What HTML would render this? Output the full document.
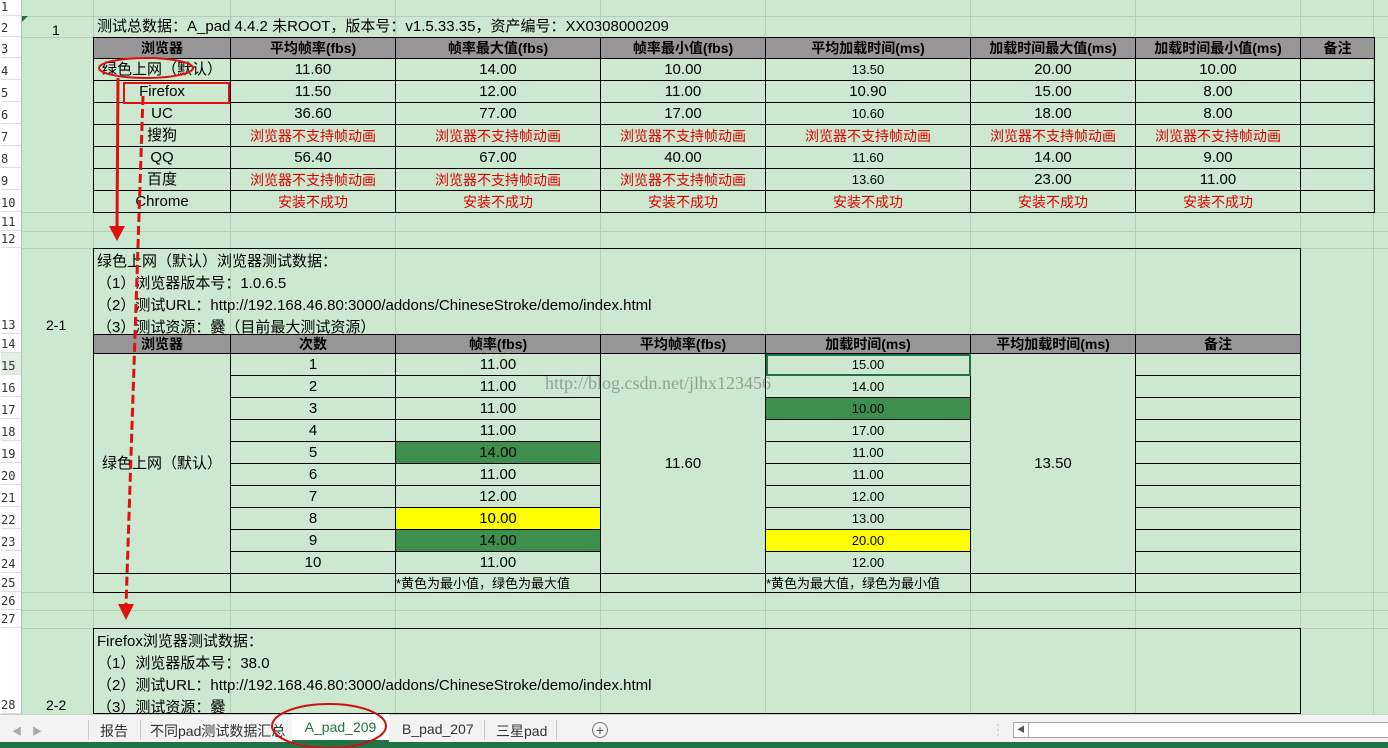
<!DOCTYPE html>
<html><head><meta charset="utf-8"><style>
*{margin:0;padding:0}
body{width:1388px;height:748px;overflow:hidden;background:#cce8cf;position:relative;font-family:"Liberation Sans","Noto Sans CJK SC",sans-serif;font-size:15px;color:#000}
.abs{position:absolute}
.hl{position:absolute;left:22px;right:0;height:1px;background:#b3cdb6}
.vl{position:absolute;top:0;height:714px;width:1px;background:#b3cdb6}
.rn{position:absolute;left:0;width:21px;background:#fff;border-right:1px solid #bbb;font-family:"DejaVu Sans Mono","Liberation Mono",monospace;font-size:12px;color:#333}
.rn div{position:absolute;left:1px;border-bottom:1px solid #ddd;width:20px;box-sizing:border-box;display:flex;align-items:flex-end;padding-bottom:1px}
table{position:absolute;border-collapse:collapse;table-layout:fixed}
td{border:1px solid #000;text-align:center;padding:0;white-space:nowrap;overflow:hidden;line-height:1}
.h td{background:#969696;font-weight:bold;font-size:14px}
.r{color:#e00000;font-size:14px}
.g{background:#3e8e4e}
.y{background:#ffff00}
.sm{font-size:13px}
.box{position:absolute;border:1px solid #000;box-sizing:border-box;padding:2px 0 0 3px;line-height:22px;font-size:15px}
</style></head><body>
<div class="hl" style="top:16px"></div><div class="hl" style="top:37px"></div><div class="hl" style="top:212px"></div><div class="hl" style="top:231px"></div><div class="hl" style="top:248px"></div><div class="hl" style="top:592px"></div><div class="hl" style="top:610px"></div><div class="hl" style="top:628px"></div>
<div class="vl" style="left:93px"></div><div class="vl" style="left:230px"></div><div class="vl" style="left:395px"></div><div class="vl" style="left:600px"></div><div class="vl" style="left:765px"></div><div class="vl" style="left:970px"></div><div class="vl" style="left:1135px"></div><div class="vl" style="left:1300px"></div><div class="vl" style="left:1373px"></div>
<div class="rn" style="top:0;height:714px">
<div style="top:0;height:16px">1</div><div style="top:16px;height:21px">2</div><div style="top:37px;height:21px">3</div><div style="top:58px;height:22px">4</div><div style="top:80px;height:22px">5</div><div style="top:102px;height:22px">6</div><div style="top:124px;height:22px">7</div><div style="top:146px;height:22px">8</div><div style="top:168px;height:22px">9</div><div style="top:190px;height:22px">10</div><div style="top:212px;height:19px">11</div><div style="top:231px;height:17px">12</div><div style="top:248px;height:86px">13</div><div style="top:334px;height:19px">14</div><div style="top:353px;height:22px;background:#e2efe4">15</div><div style="top:375px;height:22px">16</div><div style="top:397px;height:22px">17</div><div style="top:419px;height:22px">18</div><div style="top:441px;height:22px">19</div><div style="top:463px;height:22px">20</div><div style="top:485px;height:22px">21</div><div style="top:507px;height:22px">22</div><div style="top:529px;height:22px">23</div><div style="top:551px;height:22px">24</div><div style="top:573px;height:19px">25</div><div style="top:592px;height:18px">26</div><div style="top:610px;height:18px">27</div><div style="top:628px;height:86px">28</div>
</div>
<div class="abs" style="left:22px;top:16px;width:0;height:0;border-top:6px solid #217346;border-right:6px solid transparent"></div>
<div class="abs" style="left:52px;top:22px;font-size:14px">1</div>
<div class="abs" style="left:46px;top:317px;font-size:14px">2-1</div>
<div class="abs" style="left:46px;top:697px;font-size:14px">2-2</div>
<div class="abs" style="left:97px;top:17px;line-height:20px">测试总数据：A_pad 4.4.2 未ROOT，版本号：v1.5.33.35，资产编号：XX0308000209</div>

<table style="left:93px;top:37px;width:1281px">
<colgroup><col style="width:137px"><col style="width:165px"><col style="width:205px"><col style="width:165px"><col style="width:205px"><col style="width:165px"><col style="width:165px"><col style="width:74px"></colgroup>
<tr class="h" style="height:21px"><td>浏览器</td><td>平均帧率(fbs)</td><td>帧率最大值(fbs)</td><td>帧率最小值(fbs)</td><td>平均加载时间(ms)</td><td>加载时间最大值(ms)</td><td>加载时间最小值(ms)</td><td>备注</td></tr>
<tr style="height:22px"><td>绿色上网（默认）</td><td>11.60</td><td>14.00</td><td>10.00</td><td class="sm">13.50</td><td>20.00</td><td>10.00</td><td></td></tr>
<tr style="height:22px"><td>Firefox</td><td>11.50</td><td>12.00</td><td>11.00</td><td>10.90</td><td>15.00</td><td>8.00</td><td></td></tr>
<tr style="height:22px"><td>UC</td><td>36.60</td><td>77.00</td><td>17.00</td><td class="sm">10.60</td><td>18.00</td><td>8.00</td><td></td></tr>
<tr style="height:22px"><td>搜狗</td><td class="r">浏览器不支持帧动画</td><td class="r">浏览器不支持帧动画</td><td class="r">浏览器不支持帧动画</td><td class="r">浏览器不支持帧动画</td><td class="r">浏览器不支持帧动画</td><td class="r">浏览器不支持帧动画</td><td></td></tr>
<tr style="height:22px"><td>QQ</td><td>56.40</td><td>67.00</td><td>40.00</td><td class="sm">11.60</td><td>14.00</td><td>9.00</td><td></td></tr>
<tr style="height:22px"><td>百度</td><td class="r">浏览器不支持帧动画</td><td class="r">浏览器不支持帧动画</td><td class="r">浏览器不支持帧动画</td><td class="sm">13.60</td><td>23.00</td><td>11.00</td><td></td></tr>
<tr style="height:22px"><td>Chrome</td><td class="r">安装不成功</td><td class="r">安装不成功</td><td class="r">安装不成功</td><td class="r">安装不成功</td><td class="r">安装不成功</td><td class="r">安装不成功</td><td></td></tr>
</table>

<div class="box" style="left:93px;top:248px;width:1208px;height:87px;border-bottom:none">绿色上网（默认）浏览器测试数据：<br>（1）浏览器版本号：1.0.6.5<br>（2）测试URL：http://192.168.46.80:3000/addons/ChineseStroke/demo/index.html<br>（3）测试资源：爨（目前最大测试资源）</div>

<table style="left:93px;top:334px;width:1208px">
<colgroup><col style="width:137px"><col style="width:165px"><col style="width:205px"><col style="width:165px"><col style="width:205px"><col style="width:165px"><col style="width:165px"></colgroup>
<tr class="h" style="height:19px"><td>浏览器</td><td>次数</td><td>帧率(fbs)</td><td>平均帧率(fbs)</td><td>加载时间(ms)</td><td>平均加载时间(ms)</td><td>备注</td></tr>
<tr style="height:22px"><td rowspan="10">绿色上网（默认）</td><td>1</td><td>11.00</td><td rowspan="10">11.60</td><td class="sm" style="outline:2px solid #217346;outline-offset:-2px">15.00</td><td rowspan="10">13.50</td><td></td></tr>
<tr style="height:22px"><td>2</td><td>11.00</td><td class="sm">14.00</td><td></td></tr>
<tr style="height:22px"><td>3</td><td>11.00</td><td class="sm g">10.00</td><td></td></tr>
<tr style="height:22px"><td>4</td><td>11.00</td><td class="sm">17.00</td><td></td></tr>
<tr style="height:22px"><td>5</td><td class="g">14.00</td><td class="sm">11.00</td><td></td></tr>
<tr style="height:22px"><td>6</td><td>11.00</td><td class="sm">11.00</td><td></td></tr>
<tr style="height:22px"><td>7</td><td>12.00</td><td class="sm">12.00</td><td></td></tr>
<tr style="height:22px"><td>8</td><td class="y">10.00</td><td class="sm">13.00</td><td></td></tr>
<tr style="height:22px"><td>9</td><td class="g">14.00</td><td class="sm y">20.00</td><td></td></tr>
<tr style="height:22px"><td>10</td><td>11.00</td><td class="sm">12.00</td><td></td></tr>
<tr style="height:19px"><td></td><td></td><td class="sm" style="text-align:left">*黄色为最小值，绿色为最大值</td><td></td><td class="sm" style="text-align:left">*黄色为最大值，绿色为最小值</td><td></td><td></td></tr>
</table>

<div class="abs" style="left:545px;top:373px;font-family:'Liberation Serif','DejaVu Serif',serif;font-size:18px;color:rgba(110,110,110,0.6)">http://blog.csdn.net/jlhx123456</div>

<div class="box" style="left:93px;top:628px;width:1208px;height:87px;border-bottom:2px solid #000">Firefox浏览器测试数据：<br>（1）浏览器版本号：38.0<br>（2）测试URL：http://192.168.46.80:3000/addons/ChineseStroke/demo/index.html<br>（3）测试资源：爨</div>

<div class="abs" style="left:0;top:714px;width:1388px;height:28px;background:#f3f3f3;border-top:1px solid #ccc;font-size:14px;color:#333">
<div class="abs" style="left:12px;top:8px;color:#aaa;font-size:10px">◀</div>
<div class="abs" style="left:32px;top:8px;color:#aaa;font-size:10px">▶</div>
<div class="abs" style="left:88px;top:5px;width:1px;height:20px;background:#ccc"></div>
<div class="abs" style="left:100px;top:6px">报告</div>
<div class="abs" style="left:140px;top:5px;width:1px;height:20px;background:#ccc"></div>
<div class="abs" style="left:150px;top:6px">不同pad测试数据汇总</div>
<div class="abs" style="left:292px;top:-1px;width:97px;height:26px;background:#fff;border-bottom:3px solid #217346;color:#217346;text-align:center;line-height:26px">A_pad_209</div>
<div class="abs" style="left:402px;top:6px">B_pad_207</div>
<div class="abs" style="left:484px;top:5px;width:1px;height:20px;background:#ccc"></div>
<div class="abs" style="left:496px;top:6px">三星pad</div>
<div class="abs" style="left:556px;top:5px;width:1px;height:20px;background:#ccc"></div>
<div class="abs" style="left:592px;top:7px;width:14px;height:14px;border:1px solid #777;border-radius:50%;text-align:center;line-height:14px;font-size:14px;color:#555">+</div>
<div class="abs" style="left:996px;top:7px;color:#aaa;font-size:12px;line-height:5px">·<br>·<br>·</div>
<div class="abs" style="left:1013px;top:7px;width:380px;height:14px;background:#fff;border:1px solid #aaa"></div>
<div class="abs" style="left:1013px;top:7px;width:14px;height:14px;border:1px solid #aaa;font-size:8px;line-height:14px;text-align:center;color:#555">◀</div>
</div>
<div class="abs" style="left:0;top:742px;width:1388px;height:6px;background:#217346"></div>

<svg class="abs" style="left:0;top:0" width="1388" height="748">
<ellipse cx="146" cy="68" rx="47" ry="10" fill="none" stroke="#e01010" stroke-width="2"/>
<rect x="124" y="83" width="105" height="20" fill="none" stroke="#e01010" stroke-width="2"/>
<line x1="118" y1="78" x2="117" y2="228" stroke="#e01010" stroke-width="3"/>
<polygon points="109,226 125,226 117,241" fill="#e01010"/>
<line x1="143" y1="96" x2="126" y2="606" stroke="#e01010" stroke-width="3" stroke-dasharray="9,4"/>
<polygon points="118,604 134,604 126,620" fill="#e01010"/>
<ellipse cx="329" cy="726" rx="57" ry="22" fill="none" stroke="#d01010" stroke-width="2"/>
</svg>
</body></html>
